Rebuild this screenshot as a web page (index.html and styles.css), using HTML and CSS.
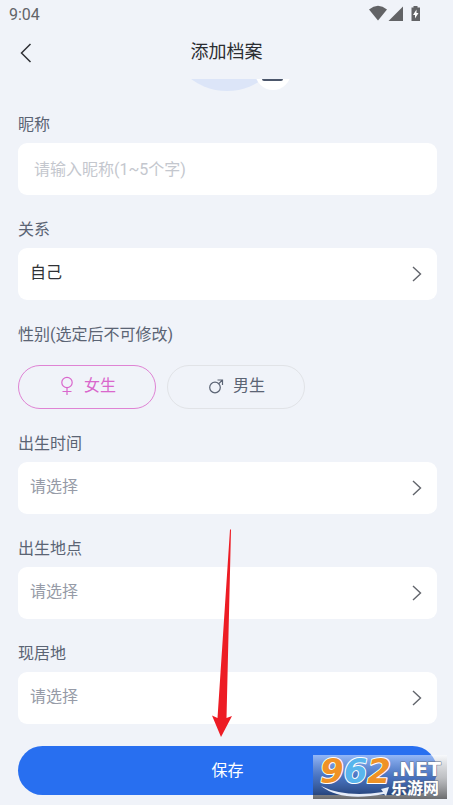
FILE: index.html
```html
<!DOCTYPE html>
<html lang="zh-CN">
<head>
<meta charset="utf-8">
<meta name="viewport" content="width=device-width, initial-scale=1">
<title>添加档案</title>
<link rel="stylesheet" href="styles.css">
</head>
<body>
<div class="status">
  <span>9:04</span>
  <svg class="status-icons" width="54" height="18" viewBox="0 0 54 18" aria-hidden="true">
    <path d="M0 4.5Q9-2.8 18 4.5L9 15.5Z"/>
    <path d="M34 1.5V16H19.500Z"/>
    <path d="M42.500 2.500H44.500V1H48.500V2.500H51V16H42.500Z"/>
    <path class="bolt" d="M47.500 4.500L44 10H46V13.500L49.500 8H47.500Z"/>
  </svg>
</div>
<header class="header">
  <button class="back" type="button" aria-label="返回">
    <svg width="12" height="20" viewBox="0 0 12 20"><path d="M10.500 1L1.500 10L10.500 19"/></svg>
  </button>
  <h1>添加档案</h1>
</header>
<main>
  <div class="avatar">
    <svg width="128" height="12" viewBox="0 0 128 12" aria-hidden="true">
      <circle cx="64" cy="-48" r="60" fill="#dce5f8"/>
      <circle cx="110" cy="-7" r="18" fill="#fff"/>
      <rect x="99" y="-12" width="21" height="14" rx="2" fill="#4b566b"/>
    </svg>
  </div>
  <form class="form">
    <div class="field">
      <label for="nickname">昵称</label>
      <input class="box text-input" id="nickname" type="text" placeholder="请输入昵称(1~5个字)">
    </div>
    <div class="field">
      <label for="relation">关系</label>
      <div class="picker">
        <select class="box" id="relation"><option>自己</option></select>
        <svg class="chevron" width="10" height="16" viewBox="0 0 10 16" aria-hidden="true"><path d="M1 1L8.500 8L1 15"/></svg>
      </div>
    </div>
    <fieldset class="field">
      <legend>性别(选定后不可修改)</legend>
      <div class="genders">
        <label class="pill">
          <input type="radio" name="gender" checked>
          <svg width="18" height="20" viewBox="0 0 18 20" aria-hidden="true"><circle cx="9" cy="6.500" r="5.200"/><path d="M9 12V19M4.500 15.500H13.500"/></svg>
          <span>女生</span>
        </label>
        <label class="pill">
          <input type="radio" name="gender">
          <svg width="18" height="20" viewBox="0 0 18 20" aria-hidden="true"><circle cx="8" cy="11.500" r="5.300"/><path d="M11.800 7.700L15.500 4M10.500 4H15.500V9"/></svg>
          <span>男生</span>
        </label>
      </div>
    </fieldset>
    <div class="field">
      <label for="birth-time">出生时间</label>
      <div class="picker">
        <select class="box empty" id="birth-time"><option>请选择</option></select>
        <svg class="chevron" width="10" height="16" viewBox="0 0 10 16" aria-hidden="true"><path d="M1 1L8.500 8L1 15"/></svg>
      </div>
    </div>
    <div class="field">
      <label for="birth-place">出生地点</label>
      <div class="picker">
        <select class="box empty" id="birth-place"><option>请选择</option></select>
        <svg class="chevron" width="10" height="16" viewBox="0 0 10 16" aria-hidden="true"><path d="M1 1L8.500 8L1 15"/></svg>
      </div>
    </div>
    <div class="field">
      <label for="residence">现居地</label>
      <div class="picker">
        <select class="box empty" id="residence"><option>请选择</option></select>
        <svg class="chevron" width="10" height="16" viewBox="0 0 10 16" aria-hidden="true"><path d="M1 1L8.500 8L1 15"/></svg>
      </div>
    </div>
    <div class="actions">
      <button class="save" type="submit">保存</button>
      <svg class="pointer" width="22" height="210" viewBox="0 0 22 210" aria-hidden="true"><path d="M19 1.500L20 1.500L15.500 190L21 188L10 209L1 187.500L6.500 190Z"/></svg>
      <svg class="watermark" width="134" height="44" viewBox="0 0 134 44" role="img" aria-label="962.NET 乐游网">
        <defs>
          <linearGradient id="shade" x1="0" y1="0" x2="0" y2="1">
            <stop offset="0" stop-color="#fff" stop-opacity=".5"/>
            <stop offset=".5" stop-color="#777" stop-opacity=".4"/>
            <stop offset="1" stop-color="#111" stop-opacity=".6"/>
          </linearGradient>
        </defs>
        <rect width="134" height="44" fill="url(#shade)"/>
        <path class="swoosh" d="M8 31Q32 43 70 37L68 34L76 32L73 41L71 39Q28 47 8 31Z"/>
        <text class="digits" x="7" y="28"><tspan fill="#ef9226">9</tspan><tspan fill="#59b5ec">6</tspan><tspan fill="#ef9226">2</tspan></text>
        <text class="net" x="79" y="21">.NET</text>
        <text class="site" x="78" y="39">乐游网</text>
      </svg>
    </div>
  </form>
</main>
</body>
</html>
```
FILE: styles.css
```css
* {
  box-sizing: border-box;
}

body {
  margin: 0;
  background: #f0f3f9;
  color: #5b6474;
  font: 16px/24px Roboto, "Noto Sans CJK SC", sans-serif;
}

button,
input,
select {
  font: inherit;
}

.status {
  display: flex;
  justify-content: space-between;
  height: 28px;
  padding: 3px 30px 0 9px;
  color: #626468;
}

.status-icons {
  margin-top: 2px;
  fill: #626366;
}

.status-icons .bolt {
  fill: #fff;
}

.header {
  display: grid;
  grid-template-columns: 48px 1fr 48px;
  align-items: center;
  height: 51px;
  padding-bottom: 3px;
}

.header h1 {
  margin: 0;
  color: #2b2d31;
  font-size: 18px;
  font-weight: 400;
  text-align: center;
}

.back {
  display: flex;
  padding: 2px 0 0 20px;
  border: 0;
  background: none;
}

.back svg {
  fill: none;
  stroke: #2f3135;
  stroke-width: 1.5;
}

.avatar {
  display: flex;
  justify-content: center;
}

.form {
  display: flex;
  flex-direction: column;
  gap: 23px;
  padding: 22px 16px 10px 18px;
}

.field {
  display: flex;
  flex-direction: column;
  gap: 6px;
  min-width: 0;
  margin: 0;
  padding: 0;
  border: 0;
}

.field legend {
  padding: 0;
}

.box {
  width: 100%;
  height: 52px;
  padding: 0 12px 2px;
  border: 0;
  border-radius: 9px;
  outline: 0;
  background: #fff;
  color: #303236;
  appearance: none;
}

.text-input {
  padding: 0 16px;
}

.text-input::placeholder {
  color: #c4c7ce;
}

.empty {
  color: #969ba7;
}

.picker {
  display: grid;
  align-items: center;
}

.picker > * {
  grid-area: 1 / 1;
}

.chevron {
  justify-self: end;
  margin-right: 15px;
  fill: none;
  stroke: #62656c;
  stroke-width: 1.4;
  pointer-events: none;
}

.genders {
  display: flex;
  gap: 11px;
  padding-top: 18px;
}

.pill {
  display: flex;
  flex: 0 1 138px;
  align-items: center;
  justify-content: center;
  gap: 8px;
  height: 44px;
  padding-bottom: 2px;
  border: 1px solid #e1e3e7;
  border-radius: 22px;
}

.pill input {
  position: absolute;
  margin: 0;
  opacity: 0;
}

.pill svg {
  fill: none;
  stroke: currentColor;
  stroke-width: 1.2;
}

.pill:has(:checked) {
  border-color: #df83d4;
  color: #d967cc;
}

.actions {
  position: relative;
  margin-top: -1px;
}

.save {
  display: block;
  width: 100%;
  height: 49px;
  border: 0;
  border-radius: 25px;
  background: #286ff0;
  color: #fff;
}

.pointer {
  position: absolute;
  bottom: 57px;
  left: calc(50% - 17px);
  fill: #ed1c24;
  pointer-events: none;
}

.watermark {
  position: absolute;
  right: -10px;
  bottom: -4px;
  overflow: visible;
  pointer-events: none;
}

.watermark text {
  paint-order: stroke;
  stroke-linejoin: round;
}

.digits {
  font: italic bold 34px "DejaVu Sans", sans-serif;
  stroke: #fff;
  stroke-width: 2px;
}

.net {
  fill: #fff;
  font: bold 19px "DejaVu Sans", sans-serif;
  stroke: #657188;
  stroke-width: 1px;
}

.site {
  fill: #fff;
  font: bold 16px "Noto Sans CJK SC", sans-serif;
  stroke: #657188;
  stroke-width: 1px;
}

.swoosh {
  fill: #e6edf9;
}
```
